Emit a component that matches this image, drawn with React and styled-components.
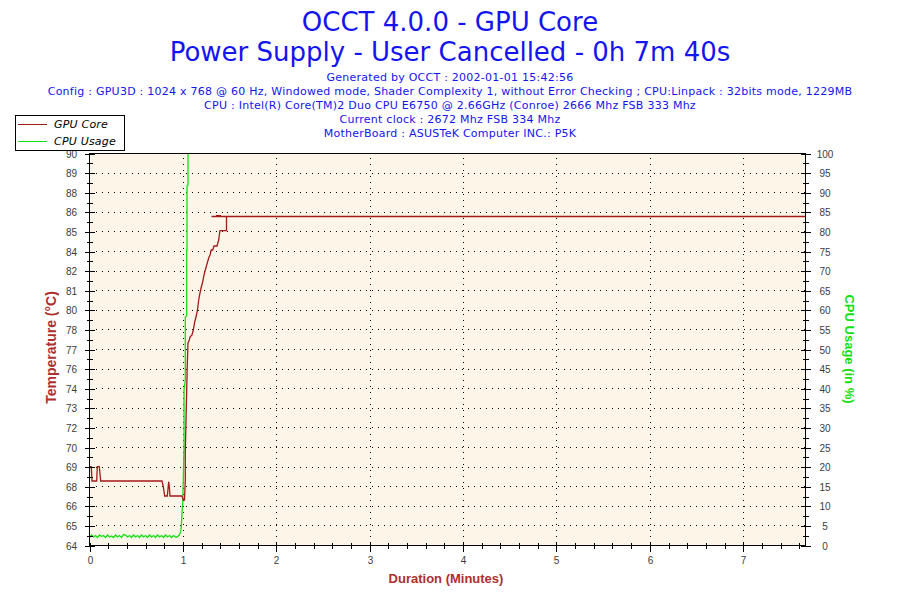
import React from "react";
import styled, { createGlobalStyle } from "styled-components";

const GlobalStyle = createGlobalStyle`
  html, body {
    margin: 0;
    padding: 0;
    background: #ffffff;
  }
  body {
    font-family: "DejaVu Sans", Verdana, sans-serif;
  }
`;

// plot box in page pixels
const PLOT = { left: 89.5, right: 805.5, top: 153.5, bottom: 545.5 };
const STEP = (PLOT.bottom - PLOT.top) / 20;
const PX_PER_MIN = (PLOT.right - PLOT.left) / (7 + 40 / 60);

const RED = "#a31a1a";
const GREEN = "#12e012";
const TITLE_RED = "#ad2f2f";

const tempLabels = [64, 65, 66, 68, 69, 70, 72, 73, 74, 76, 77, 78, 80, 81, 82, 84, 85, 86, 88, 89, 90];

const infoLines = [
  "Generated by OCCT : 2002-01-01 15:42:56",
  "Config : GPU3D : 1024 x 768 @ 60 Hz, Windowed mode, Shader Complexity 1, without Error Checking ; CPU:Linpack : 32bits mode, 1229MB",
  "CPU : Intel(R) Core(TM)2 Duo CPU E6750 @ 2.66GHz (Conroe) 2666 Mhz FSB 333 Mhz",
  "Current clock : 2672 Mhz FSB 334 Mhz",
  "MotherBoard : ASUSTeK Computer INC.: P5K",
];

const gpuPoints = [
  [89.5, 466.7], [91.3, 466.7], [92, 481], [96.7, 481], [97.3, 466.7], [99.3, 466.7],
  [100.7, 481], [162, 481], [163.3, 486.7], [164.7, 496], [167.3, 496], [168.7, 481.7],
  [169.3, 486.7], [170, 496], [182, 496], [183.3, 500], [184.5, 500], [185.3, 480],
  [185.3, 453], [186, 420], [186.7, 390], [187.3, 364], [188, 343], [189.3, 340],
  [190, 337], [192, 335], [193.3, 330], [194.7, 322], [196, 317], [197.3, 311],
  [198.7, 300], [200, 293], [201.3, 287], [202.7, 282], [204, 275], [205.3, 270],
  [206.7, 265], [208.7, 258], [210, 255], [211.3, 250], [212.7, 250], [214, 246],
  [217, 246], [218.7, 240], [219.3, 235], [220, 230.7], [226.5, 230.5], [226.5, 216.5],
];

const wave = [1, -1.5, 0.5, -1, 1, -1.5, 0, -1, 1, -1.5, 0.5, -0.5, 1, -1.5, 0.5, -1, 1, -2, -1.5, 0.5, -1, 1, -1.5, 0.5, -1, 1, -1.5, 0.5, -1, 1, -1.5, 0.5, -1, 1, -1.5, 0.5, -1, 1, -1.5, 0.5, -1, 1, -1, 0.5];
const cpuPoints = [
  ...wave.map((d, i) => [89.5 + i * 2, 536.5 + d]),
  [177, 537], [179.3, 535], [180.7, 531.7], [181.3, 526.7], [182, 513], [182.7, 503],
  [183.3, 480], [184, 447], [184, 390], [185.3, 380], [185.3, 317], [186.7, 316],
  [186.7, 250], [187, 250], [187, 186], [188, 185], [188, 153.5],
];

const toPath = (pts) => pts.map(([x, y]) => `${x},${y}`).join(" ");

const Page = styled.div`
  position: relative;
  width: 900px;
  height: 600px;
  overflow: hidden;
  display: flex;
  flex-direction: column;
  background: #ffffff;
`;

const Header = styled.header`
  height: 145px;
  box-sizing: border-box;
  padding-top: 7px;
  display: flex;
  flex-direction: column;
  align-items: center;
  color: #1414f0;
`;

const Title = styled.h1`
  margin: 0;
  font-family: "DejaVu Sans", Verdana, sans-serif;
  font-weight: normal;
  font-size: 26px;
  line-height: 30px;
  white-space: nowrap;
`;

const InfoBlock = styled.div`
  margin-top: 4px;
  display: flex;
  flex-direction: column;
  align-items: center;
`;

const InfoLine = styled.p`
  margin: 0;
  font-family: "DejaVu Sans", Verdana, sans-serif;
  font-size: 11px;
  letter-spacing: 0.25px;
  line-height: 14px;
  white-space: nowrap;
`;

const Legend = styled.div`
  position: absolute;
  left: 15px;
  top: 115px;
  width: 110px;
  height: 36px;
  box-sizing: border-box;
  border: 1px solid #000000;
  background: #ffffff;
  display: flex;
  flex-direction: column;
  justify-content: center;
  gap: 1px;
  padding-bottom: 1px;
`;

const LegendRow = styled.div`
  display: flex;
  align-items: center;
  height: 17px;
`;

const Swatch = styled.span`
  width: 29px;
  height: 1px;
  margin: 0 7px 0 2px;
  background: ${(p) => p.$color};
`;

const LegendText = styled.span`
  font-family: "DejaVu Sans", Verdana, sans-serif;
  font-style: italic;
  font-size: 11px;
  letter-spacing: 0.2px;
  color: #000000;
  white-space: nowrap;
`;

const ChartSvg = styled.svg`
  display: block;
  flex: none;
  width: 900px;
  height: 455px;
  font-family: "Liberation Sans", Arial, sans-serif;
`;

const TickLabel = styled.text`
  font-size: 10px;
  fill: #3c3c3c;
`;

const AxisTitle = styled.text`
  font-size: ${(p) => p.$size || 13}px;
  font-weight: bold;
  fill: ${(p) => p.$color};
`;

function Grid() {
  const rows = [];
  for (let i = 1; i < 20; i++) {
    const y = PLOT.bottom - i * STEP;
    rows.push(
      <line key={"h" + i} x1={PLOT.left + 6} x2={PLOT.right} y1={y} y2={y}
        stroke="#000" strokeDasharray="1 5" />
    );
  }
  for (let m = 1; m <= 7; m++) {
    const x = Math.round(PLOT.left + m * PX_PER_MIN) + 0.5;
    rows.push(
      <line key={"v" + m} x1={x} x2={x} y1={PLOT.top + 4} y2={PLOT.bottom}
        stroke="#000" strokeDasharray="1 5" />
    );
  }
  return <g shapeRendering="crispEdges">{rows}</g>;
}

function YAxes() {
  const parts = [];
  for (let i = 0; i <= 40; i++) {
    const y = Math.round(PLOT.bottom - (i * STEP) / 2) + 0.5;
    const major = i % 2 === 0;
    const len = major ? 5 : 3;
    parts.push(
      <line key={"l" + i} x1={PLOT.left - len} x2={PLOT.left + len} y1={y} y2={y} stroke="#000" />,
      <line key={"r" + i} x1={PLOT.right - len} x2={PLOT.right + len} y1={y} y2={y} stroke="#000" />
    );
    if (major) {
      const k = i / 2;
      parts.push(
        <TickLabel key={"lt" + i} x={71.5} y={y + 3.5} textAnchor="middle">{tempLabels[k]}</TickLabel>,
        <TickLabel key={"rt" + i} x={825} y={y + 3.5} textAnchor="middle">{k * 5}</TickLabel>
      );
    }
  }
  return <g shapeRendering="crispEdges">{parts}</g>;
}

function XAxis() {
  const parts = [];
  for (let i = 0; i <= 38; i++) {
    const x = Math.round(PLOT.left + (i / 5) * PX_PER_MIN) + 0.5;
    const major = i % 5 === 0;
    parts.push(
      <line key={"x" + i} x1={x} x2={x} y1={PLOT.bottom - 3} y2={PLOT.bottom + (major ? 6 : 3)} stroke="#000" />
    );
    if (major) {
      parts.push(
        <TickLabel key={"xt" + i} x={x} y={564} textAnchor="middle">{i / 5}</TickLabel>
      );
    }
  }
  return <g shapeRendering="crispEdges">{parts}</g>;
}

function Chart() {
  return (
    <ChartSvg viewBox="0 145 900 455">
      <rect x={PLOT.left} y={PLOT.top} width={PLOT.right - PLOT.left} height={PLOT.bottom - PLOT.top}
        fill="#fdf6e8" />
      <Grid />
      <polyline points={toPath(cpuPoints)} fill="none" stroke={GREEN} strokeWidth="1.3" />
      <polyline points={toPath(gpuPoints)} fill="none" stroke={RED} strokeWidth="1.3" />
      <line x1={211.5} x2={PLOT.right} y1={216.5} y2={216.5} stroke={RED} strokeWidth="1.3" />
      <rect x={216} y={215} width={5} height={1.5} fill={RED} />
      <rect x={PLOT.left} y={PLOT.top} width={PLOT.right - PLOT.left} height={PLOT.bottom - PLOT.top}
        fill="none" stroke="#000" shapeRendering="crispEdges" />
      <YAxes />
      <XAxis />
      <AxisTitle $color={TITLE_RED} $size={14} transform="translate(56 347.5) rotate(-90)" textAnchor="middle">
        Temperature (°C)
      </AxisTitle>
      <AxisTitle $color={GREEN} transform="translate(845 349) rotate(90)" textAnchor="middle">
        CPU Usage (in %)
      </AxisTitle>
      <AxisTitle $color={TITLE_RED} x={446} y={583} textAnchor="middle">
        Duration (Minutes)
      </AxisTitle>
    </ChartSvg>
  );
}

export default function App() {
  return (
    <Page>
      <GlobalStyle />
      <Header>
        <Title>OCCT 4.0.0 - GPU Core</Title>
        <Title>Power Supply - User Cancelled - 0h 7m 40s</Title>
        <InfoBlock>
          {infoLines.map((line) => (
            <InfoLine key={line}>{line}</InfoLine>
          ))}
        </InfoBlock>
      </Header>
      <Chart />
      <Legend>
        <LegendRow>
          <Swatch $color={RED} />
          <LegendText>GPU Core</LegendText>
        </LegendRow>
        <LegendRow>
          <Swatch $color={GREEN} />
          <LegendText>CPU Usage</LegendText>
        </LegendRow>
      </Legend>
    </Page>
  );
}
